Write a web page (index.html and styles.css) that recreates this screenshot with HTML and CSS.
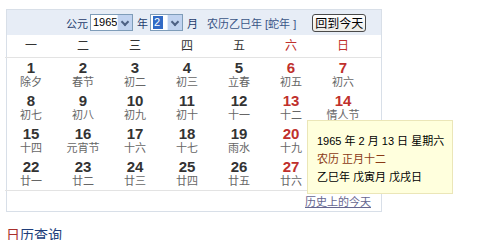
FILE: index.html
```html
<!DOCTYPE html>
<html lang="zh-CN">
<head>
  <meta charset="UTF-8" />
  <title>日历</title>
  <link rel="stylesheet" href="styles.css">
</head>
<body>

  <!-- CALENDAR PANEL -->
  <div class="calendar">
    <div class="cal-head">
      <span class="label">公元</span>
      <span class="combo year-combo"><span class="combo-text">1965</span><span class="combo-arrow"></span></span>
      <span class="label">年</span>
      <span class="combo month-combo"><span class="combo-text"><span class="selected">2</span></span><span class="combo-arrow"></span></span>
      <span class="label">月</span>
      <span class="lunar-year">农历乙巳年 [蛇年 ]</span>
      <button class="today-btn">回到今天</button>
    </div>

    <div class="weekdays">
      <span>一</span><span>二</span><span>三</span><span>四</span><span>五</span>
      <span class="weekend">六</span><span class="weekend">日</span>
    </div>

    <div class="days">
      <div class="day"><b>1</b><i>除夕</i></div>
      <div class="day"><b>2</b><i>春节</i></div>
      <div class="day"><b>3</b><i>初二</i></div>
      <div class="day"><b>4</b><i>初三</i></div>
      <div class="day"><b>5</b><i>立春</i></div>
      <div class="day weekend"><b>6</b><i>初五</i></div>
      <div class="day weekend"><b>7</b><i>初六</i></div>

      <div class="day"><b>8</b><i>初七</i></div>
      <div class="day"><b>9</b><i>初八</i></div>
      <div class="day"><b>10</b><i>初九</i></div>
      <div class="day"><b>11</b><i>初十</i></div>
      <div class="day"><b>12</b><i>十一</i></div>
      <div class="day weekend"><b>13</b><i>十二</i></div>
      <div class="day weekend"><b>14</b><i>情人节</i></div>

      <div class="day"><b>15</b><i>十四</i></div>
      <div class="day"><b>16</b><i>元宵节</i></div>
      <div class="day"><b>17</b><i>十六</i></div>
      <div class="day"><b>18</b><i>十七</i></div>
      <div class="day"><b>19</b><i>雨水</i></div>
      <div class="day weekend"><b>20</b><i>十九</i></div>
      <div class="day weekend"><b>21</b><i>二十</i></div>

      <div class="day"><b>22</b><i>廿一</i></div>
      <div class="day"><b>23</b><i>廿二</i></div>
      <div class="day"><b>24</b><i>廿三</i></div>
      <div class="day"><b>25</b><i>廿四</i></div>
      <div class="day"><b>26</b><i>廿五</i></div>
      <div class="day weekend"><b>27</b><i>廿六</i></div>
      <div class="day weekend"><b>28</b><i>廿七</i></div>
    </div>

    <div class="cal-foot">
      <a href="#" class="history-link">历史上的今天</a>
    </div>

    <!-- tooltip for hovered day -->
    <div class="day-tip">
      <p>1965 年 2 月 13 日 星期六</p>
      <p class="tip-lunar">农历 正月十二</p>
      <p>乙巳年 戊寅月 戊戌日</p>
    </div>
  </div>

  <h3 class="section-title"><span class="first">日</span>历查询</h3>

</body>
</html>
```

FILE: styles.css
```css
body {
  margin: 0;
  font-family: Arial, "Liberation Sans", "Noto Sans CJK SC", sans-serif;
  font-size: 11px;
  color: #333;
  background: #fff;
}

/* CALENDAR PANEL */
.calendar {
  position: relative;
  width: 374px;
  margin: 9px 0 0 6px;
  border: 1px solid #d8dfe8;
}

.cal-head {
  height: 25px;
  background: #e7edf6;
  display: flex;
  align-items: center;
  padding-left: 59px;
  color: #1d3b6c;
}

.label {
  margin-right: 2px;
}

.combo {
  display: flex;
  height: 17px;
  border: 1px solid #7f9db9;
  background: #fff;
  margin-right: 4px;
  box-sizing: border-box;
}

.year-combo {
  width: 43px;
}

.month-combo {
  width: 33px;
}

.combo-text {
  flex: 1;
  font-size: 11px;
  line-height: 15px;
  padding-left: 2px;
  color: #000;
}

.selected {
  display: inline-block;
  background: #316ac5;
  color: #fff;
  padding: 0 3px 0 1px;
  line-height: 13px;
  margin-top: 1px;
}

.combo-arrow {
  width: 14px;
  background: #c1d3f0;
  border-left: 1px solid #e6eefc;
  position: relative;
}

.combo-arrow::after {
  content: "";
  position: absolute;
  left: 4px;
  top: 4px;
  width: 4px;
  height: 4px;
  border-right: 2px solid #4d6185;
  border-bottom: 2px solid #4d6185;
  transform: rotate(45deg);
}

.lunar-year {
  margin-left: 7px;
  color: #3a5687;
}

.today-btn {
  margin-left: 16px;
  width: 54px;
  height: 18px;
  padding: 0;
  font-family: "Noto Sans CJK SC", sans-serif;
  font-size: 12px;
  line-height: 14px;
  color: #000;
  border: 1px solid #4a4a4a;
  border-radius: 3px;
  background: linear-gradient(#ffffff, #ecebe6);
}

.weekdays {
  display: grid;
  grid-template-columns: repeat(7, 52px);
  margin-left: -2px;
  height: 22px;
  line-height: 22px;
  font-size: 12px;
  text-align: center;
  border-bottom: 1px solid #e3e3e3;
}

.weekend {
  color: #c0302c;
}

.days {
  display: grid;
  grid-template-columns: repeat(7, 52px);
  grid-auto-rows: 33px;
  margin-left: -2px;
  text-align: center;
  border-bottom: 1px solid #e3e3e3;
}

.day {
  padding-top: 2px;
}

.day b {
  display: block;
  font-size: 15px;
  line-height: 15px;
  color: #333;
}

.day.weekend b {
  color: #c0302c;
}

.day i {
  display: block;
  font-style: normal;
  line-height: 15px;
  color: #666;
}

.cal-foot {
  height: 20px;
  display: flex;
  justify-content: flex-end;
  align-items: center;
  padding-right: 10px;
}

.history-link {
  color: #66668f;
  font-size: 11px;
}

.day-tip {
  position: absolute;
  left: 300px;
  top: 110px;
  width: 135px;
  height: 61px;
  padding: 11px 0 0 9px;
  background: #ffffdd;
  border: 1px solid #ebe6b8;
  color: #000;
  white-space: nowrap;
}

.day-tip p {
  margin: 0;
  line-height: 18px;
}

.day-tip .tip-lunar {
  color: #8a3a16;
}

.section-title {
  margin: 15px 0 0 6px;
  font-size: 14px;
  line-height: 16px;
  font-weight: normal;
  color: #203d7a;
}

.section-title .first {
  color: #a8302c;
}
```
